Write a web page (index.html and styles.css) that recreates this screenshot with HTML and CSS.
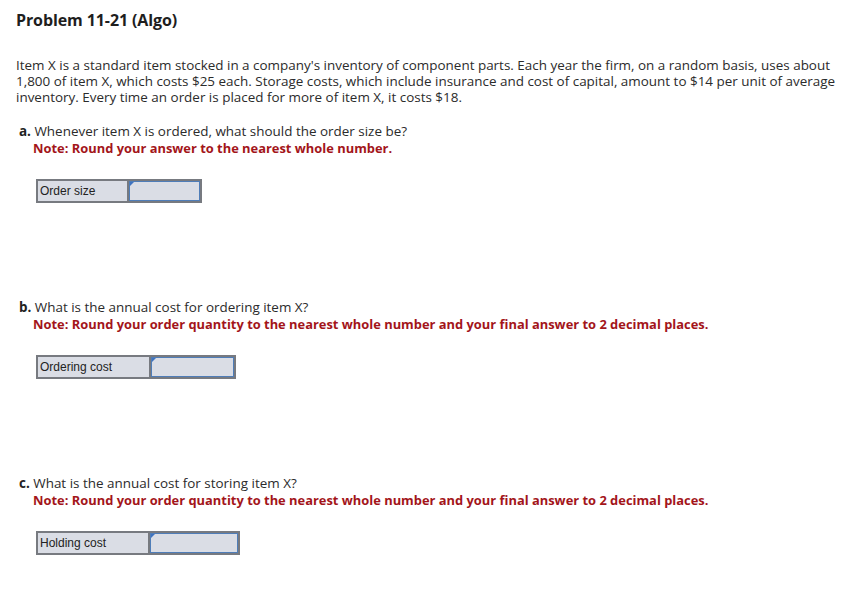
FILE: index.html
```html
<!DOCTYPE html>
<html>
<head>
<meta charset="utf-8">
<link rel="stylesheet" href="styles.css">
</head>
<body>
<div class="page">
  <h1 class="title">Problem 11-21 (Algo)</h1>
  <p class="intro">Item X is a standard item stocked in a company's inventory of component parts. Each year the firm, on a random basis, uses about 1,800 of item X, which costs $25 each. Storage costs, which include insurance and cost of capital, amount to $14 per unit of average inventory. Every time an order is placed for more of item X, it costs $18.</p>

  <div class="part part-a">
    <div class="q"><b>a.</b> Whenever item X is ordered, what should the order size be?</div>
    <div class="note">Note: Round your answer to the nearest whole number.</div>
    <table class="ans">
      <tr><td class="lbl w-a">Order size</td><td class="inp w-ia"><span class="tri"></span></td></tr>
    </table>
  </div>

  <div class="part part-b">
    <div class="q"><b>b.</b> What is the annual cost for ordering item X?</div>
    <div class="note">Note: Round your order quantity to the nearest whole number and your final answer to 2 decimal places.</div>
    <table class="ans">
      <tr><td class="lbl w-b">Ordering cost</td><td class="inp w-ib"><span class="tri"></span></td></tr>
    </table>
  </div>

  <div class="part part-c">
    <div class="q"><b>c.</b> What is the annual cost for storing item X?</div>
    <div class="note">Note: Round your order quantity to the nearest whole number and your final answer to 2 decimal places.</div>
    <table class="ans">
      <tr><td class="lbl w-c">Holding cost</td><td class="inp w-ic"><span class="tri"></span></td></tr>
    </table>
  </div>
</div>
</body>
</html>
```

FILE: styles.css
```css
html, body {
  margin: 0;
  padding: 0;
  background: #fff;
}
.page {
  padding: 10px 16px 0 16px;
  font-family: "Open Sans", "Noto Sans", sans-serif;
  color: #2b2b2b;
}
.title {
  margin: 0;
  font-size: 16px;
  font-weight: 700;
  line-height: 20px;
  color: #1e1e1e;
  letter-spacing: -0.1px;
}
.intro {
  margin: 27px 0 0 0;
  font-size: 13.45px;
  line-height: 16px;
}
.part {
  padding-left: 3px;
  font-size: 13.45px;
  line-height: 16px;
}
.note { margin-top: 1px; }
.part-a { margin-top: 18px; }
.part-b { margin-top: 97px; }
.part-c { margin-top: 97px; }
.part-b .q, .part-c .q { line-height: 15px; }
.q b { font-weight: 700; color: #222; }
.note {
  padding-left: 14px;
  font-size: 12.9px;
  font-weight: 700;
  color: #a3151a;
}
.ans {
  border-collapse: collapse;
  margin: 23px 0 0 17px;
  font-family: "Liberation Sans", Arial, sans-serif;
  font-size: 12px;
  color: #222;
}
.ans td {
  height: 20px;
  padding: 0;
  background: #dadde5;
  border: 2px solid #777a80;
}
.lbl {
  padding: 0 0 0 2px !important;
  vertical-align: middle;
}
.inp {
  position: relative;
  box-shadow: inset 0 0 0 1px #4f7db8;
}
.tri {
  position: absolute;
  left: 1px;
  top: 1px;
  width: 0;
  height: 0;
  border-top: 4px solid #3f73c0;
  border-right: 4px solid transparent;
}
.w-a { width: 87px; }
.w-ia { width: 71px; }
.w-b { width: 109px; }
.w-ib { width: 83px; }
.w-c { width: 108px; }
.w-ic { width: 88px; }
```
